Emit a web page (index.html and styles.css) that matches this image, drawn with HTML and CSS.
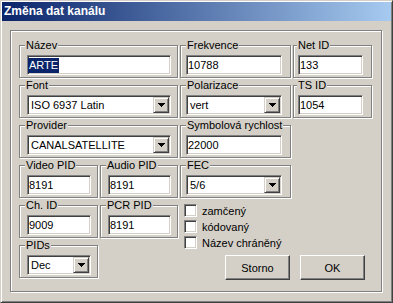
FILE: index.html
```html
<!doctype html>
<html>
    <head>
        <meta charset="UTF-8" />
        <meta name="viewport" content="width=device-width" />
        <title>Změna dat kanálu</title>
        <link rel="stylesheet" href="styles.css">
    </head>
    <body>
        <div class="window">
            <div class="titlebar">Změna dat kanálu</div>
            <div class="frame">
                <div class="grid">
                    <fieldset class="group">
                        <legend>Název</legend>
                        <div class="edit"><span class="sel">ARTE</span></div>
                    </fieldset>
                    <fieldset class="group mid">
                        <legend>Frekvence</legend>
                        <div class="edit">10788</div>
                    </fieldset>
                    <fieldset class="group narrow">
                        <legend>Net ID</legend>
                        <div class="edit">133</div>
                    </fieldset>

                    <fieldset class="group">
                        <legend>Font</legend>
                        <div class="combo">
                            <span class="value">ISO 6937 Latin</span>
                            <span class="drop"><svg width="7" height="4" viewBox="0 0 7 4"><path d="M0 0H7V1H6V2H5V3H4V4H3V3H2V2H1V1H0Z" /></svg></span>
                        </div>
                    </fieldset>
                    <fieldset class="group mid">
                        <legend>Polarizace</legend>
                        <div class="combo">
                            <span class="value">vert</span>
                            <span class="drop"><svg width="7" height="4" viewBox="0 0 7 4"><path d="M0 0H7V1H6V2H5V3H4V4H3V3H2V2H1V1H0Z" /></svg></span>
                        </div>
                    </fieldset>
                    <fieldset class="group narrow">
                        <legend>TS ID</legend>
                        <div class="edit">1054</div>
                    </fieldset>

                    <fieldset class="group colA">
                        <legend>Provider</legend>
                        <div class="combo">
                            <span class="value">CANALSATELLITE</span>
                            <span class="drop"><svg width="7" height="4" viewBox="0 0 7 4"><path d="M0 0H7V1H6V2H5V3H4V4H3V3H2V2H1V1H0Z" /></svg></span>
                        </div>
                    </fieldset>
                    <fieldset class="group mid">
                        <legend>Symbolová rychlost</legend>
                        <div class="edit">22000</div>
                    </fieldset>

                    <div class="pair colA">
                        <fieldset class="group">
                            <legend>Video PID</legend>
                            <div class="edit">8191</div>
                        </fieldset>
                        <fieldset class="group">
                            <legend>Audio PID</legend>
                            <div class="edit">8191</div>
                        </fieldset>
                    </div>
                    <fieldset class="group mid">
                        <legend>FEC</legend>
                        <div class="combo">
                            <span class="value">5/6</span>
                            <span class="drop"><svg width="7" height="4" viewBox="0 0 7 4"><path d="M0 0H7V1H6V2H5V3H4V4H3V3H2V2H1V1H0Z" /></svg></span>
                        </div>
                    </fieldset>

                    <div class="pair colA">
                        <fieldset class="group">
                            <legend>Ch. ID</legend>
                            <div class="edit">9009</div>
                        </fieldset>
                        <fieldset class="group">
                            <legend>PCR PID</legend>
                            <div class="edit">8191</div>
                        </fieldset>
                    </div>

                    <div class="options">
                        <label class="check"><span class="box"></span>zamčený</label>
                        <label class="check"><span class="box"></span>kódovaný</label>
                        <label class="check"><span class="box"></span>Název chráněný</label>
                        <div class="buttons">
                            <button class="btn">Storno</button>
                            <button class="btn">OK</button>
                        </div>
                    </div>

                    <fieldset class="group pids">
                        <legend>PIDs</legend>
                        <div class="combo">
                            <span class="value">Dec</span>
                            <span class="drop"><svg width="7" height="4" viewBox="0 0 7 4"><path d="M0 0H7V1H6V2H5V3H4V4H3V3H2V2H1V1H0Z" /></svg></span>
                        </div>
                    </fieldset>
                </div>
            </div>
        </div>
    </body>
</html>
```

FILE: styles.css
```css
html,
body {
    margin: 0;
    background-color: #d4d0c8;
}
body {
    font-family: "Liberation Sans", Arial, sans-serif;
    font-size: 11px;
    color: black;
}
.window {
    width: 393px;
    height: 303px;
    box-sizing: border-box;
    padding: 1px;
    border: 1px solid;
    border-color: #d4d0c8 #404040 #404040 #d4d0c8;
    box-shadow: inset 1px 1px 0 #fff, inset -1px -1px 0 #808080;
    background-color: #d4d0c8;
}
.titlebar {
    height: 19px;
    line-height: 19px;
    padding-left: 2px;
    color: white;
    font-weight: bold;
    font-size: 12px;
    background: linear-gradient(to right, #0a246a, #a6caf0);
}
.frame {
    width: 372px;
    height: 262px;
    box-sizing: border-box;
    margin: 9px 0 0 8px;
    padding: 8px 0 0 8px;
    border: 1px solid #808080;
    box-shadow: 1px 1px 0 #fff, inset 1px 1px 0 #fff;
}
.grid {
    display: grid;
    grid-template-columns: 159px 111px 79px;
    grid-template-rows: repeat(6, 39px);
    gap: 1px 2px;
}
.colA {
    grid-column: 1;
}
.pair {
    display: grid;
    grid-template-columns: 79px 78px;
    column-gap: 2px;
}
.group {
    margin: 0;
    min-width: 0;
    box-sizing: border-box;
    padding: 3px 6px 2px 7px;
    border: 1px solid #808080;
    box-shadow: 1px 1px 0 #fff, inset 1px 1px 0 #fff;
}
.group legend {
    height: 13px;
    line-height: 13px;
    padding: 0 1px;
    margin-left: -2px;
    background-color: #d4d0c8;
}
.mid .edit,
.mid .combo {
    margin: 0 2px 0 -2px;
}
.narrow .edit {
    margin: 0 2px 0 -3px;
}
.narrow legend {
    margin-left: -4px;
}
.pids {
    grid-column: 1;
    grid-row: 6;
    width: 79px;
}
/* sunken 3d fields */
.edit,
.combo,
.box {
    box-sizing: border-box;
    border: 1px solid;
    border-color: #808080 #fff #fff #808080;
    box-shadow: inset 1px 1px 0 #404040, inset -1px -1px 0 #d4d0c8;
    background-color: white;
}
.edit {
    height: 20px;
    line-height: 18px;
    padding: 0 1px;
    white-space: nowrap;
}
.sel {
    display: inline-block;
    line-height: 15px;
    margin-left: -1px;
    padding: 0 1px;
    background-color: #0a246a;
    color: white;
}
.combo {
    display: flex;
    height: 20px;
    padding: 1px;
}
.combo .value {
    flex: 1;
    line-height: 16px;
    padding-left: 2px;
    white-space: nowrap;
    overflow: hidden;
}
.drop {
    width: 16px;
    height: 16px;
    box-sizing: border-box;
    display: flex;
    align-items: center;
    justify-content: center;
    border: 1px solid;
    border-color: #d4d0c8 #404040 #404040 #d4d0c8;
    box-shadow: inset 1px 1px 0 #fff, inset -1px -1px 0 #808080;
    background-color: #d4d0c8;
}
.drop svg {
    display: block;
    shape-rendering: crispEdges;
}
.options {
    grid-column: 2 / 4;
    grid-row: 5 / 7;
    display: flex;
    flex-direction: column;
    padding: 5px 7px 0 4px;
}
.check {
    display: flex;
    align-items: center;
    height: 13px;
    margin-bottom: 3px;
}
.box {
    width: 13px;
    height: 13px;
    margin-right: 5px;
}
.buttons {
    display: flex;
    justify-content: flex-end;
    gap: 10px;
    margin-top: 3px;
}
.btn {
    width: 65px;
    height: 25px;
    padding: 0;
    margin: 0;
    font-family: inherit;
    font-size: 11px;
    color: black;
    background-color: #d4d0c8;
    border: 1px solid;
    border-color: #fff #404040 #404040 #fff;
    box-shadow: inset -1px -1px 0 #808080;
}
```
